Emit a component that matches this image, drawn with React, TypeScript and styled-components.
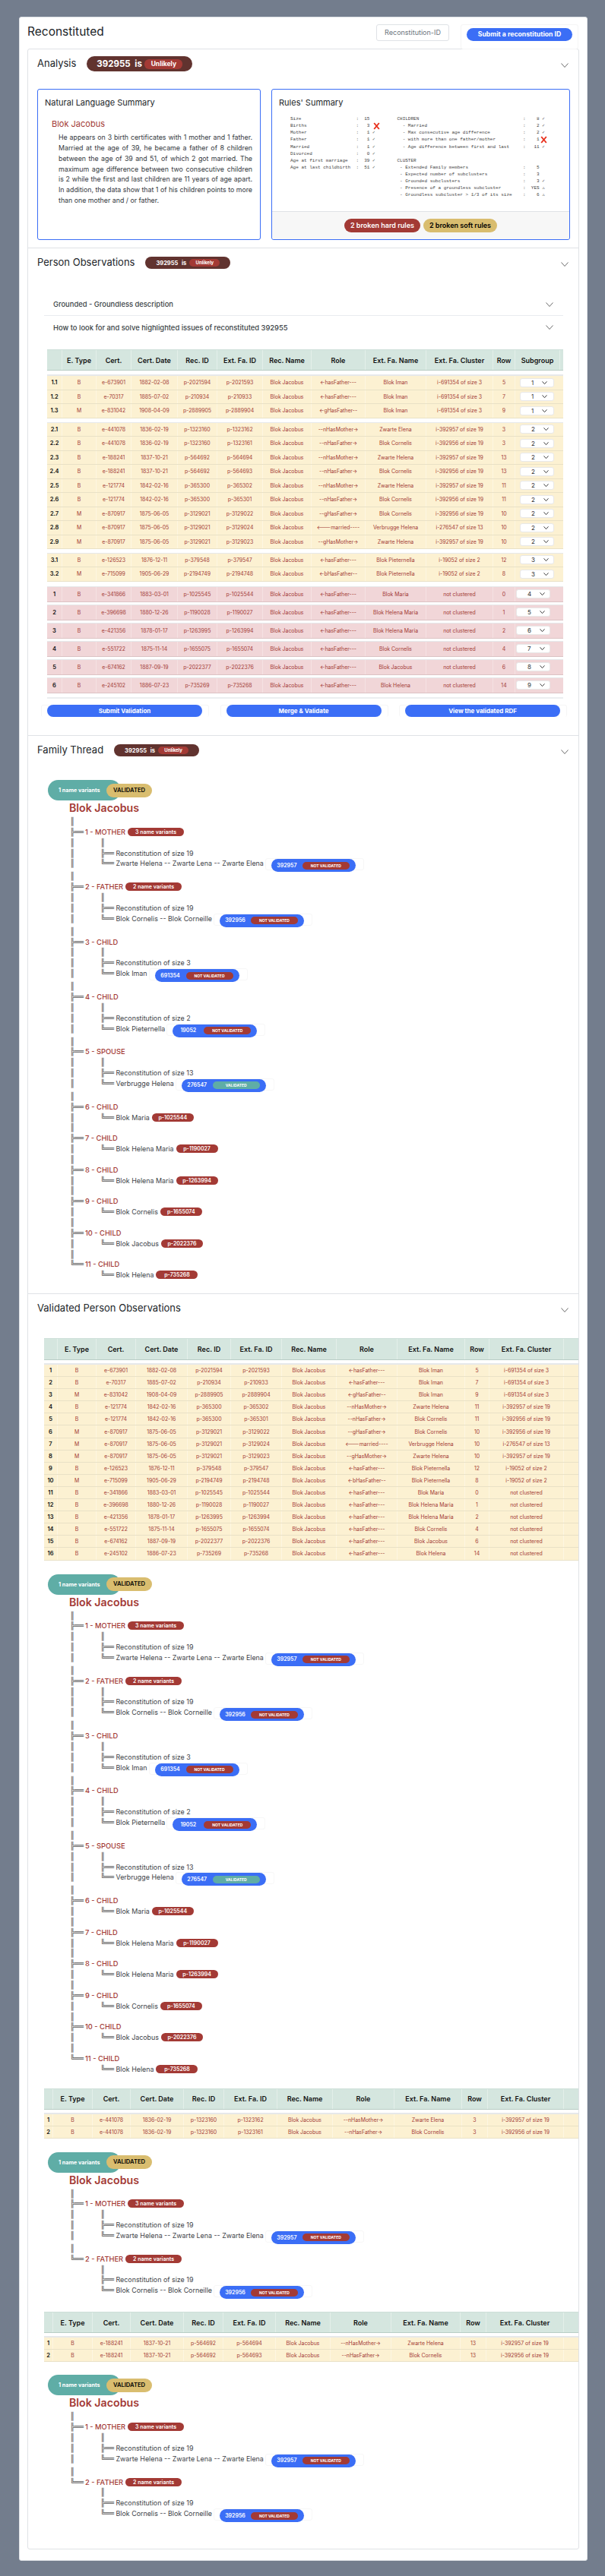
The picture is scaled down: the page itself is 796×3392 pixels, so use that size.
import React from "react";
import styled, { createGlobalStyle } from "styled-components";

const RED = "#a33a35";
const GOLD = "#d9bd6f";
const TEAL = "#5fada6";
const BLUE = "#3b6ef6";
const BROWN = "#61332f";

const Global = createGlobalStyle`
  html, body { margin: 0; padding: 0; background: #737d8d; }
  body { font-family: Inter, "Liberation Sans", sans-serif; color: #212529; }
  * { box-sizing: border-box; }
`;

const Page = styled.div`
  padding: 22px 23px 20px 25px;
  height: 3392px;
  overflow: hidden;
`;
const Card = styled.div`
  height: 3350px;
  background: #fff;
  border: 1px solid #dfe2e6;
  border-radius: 3px;
  padding: 0 10px;
`;
const CardHead = styled.div`
  display: flex;
  align-items: flex-start;
  height: 41px;
  padding-top: 9px;
`;
const PageTitle = styled.h1`
  flex: 1;
  margin: 0;
  font-size: 15.5px;
  line-height: 19px;
  font-weight: 400;
`;
const IdInput = styled.div`
  width: 96px;
  height: 22px;
  border: 1px solid #dfe2e6;
  border-radius: 3px;
  font-size: 9px;
  line-height: 20px;
  text-align: center;
  color: #6c757d;
`;
const SubmitWrap = styled.div`
  margin-left: 15px;
  margin-right: 1px;
  padding: 4px 7px 10px;
  border: 1px solid #f5f5f5;
  border-radius: 3px;
  display: flex;
`;
const PrimaryButton = styled.div<{ $w: number }>`
  width: ${(p) => p.$w}px;
  height: 17px;
  border-radius: 9px;
  background: ${BLUE};
  color: #fff;
  font-size: 8.7px;
  line-height: 17px;
  font-weight: 700;
  text-align: center;
`;
const Accordion = styled.div`
  height: 3293px;
  border: 1px solid #dfe2e6;
  border-radius: 3px;
`;
const Section = styled.section<{ $first?: boolean }>`
  border-top: ${(p) => (p.$first ? "0" : "1px solid #dfe2e6")};
`;
const SectionHead = styled.div`
  height: 36px;
  padding: 0 13px 0 12px;
  display: flex;
  align-items: center;
  gap: 14px;
`;
const SectionTitle = styled.h2`
  margin: 0;
  font-size: 13px;
  font-weight: 400;
  white-space: nowrap;
`;
const Spacer = styled.div`
  flex: 1;
`;
const ChevronBox = styled.span`
  display: flex;
  margin-top: 5px;
`;
const Status = styled.div<{ $big?: boolean }>`
  display: flex;
  align-items: center;
  justify-content: space-between;
  width: ${(p) => (p.$big ? 139 : 112)}px;
  height: ${(p) => (p.$big ? 20 : 16)}px;
  padding: ${(p) => (p.$big ? "0 13px 0 13px" : "0 14px 0 14px")};
  border-radius: ${(p) => (p.$big ? 10 : 8)}px;
  background: ${BROWN};
  color: #fff;
  font-size: ${(p) => (p.$big ? 11.5 : 7.5)}px;
  font-weight: 700;
  word-spacing: 3px;
  margin-top: 2px;
`;
const StatusTag = styled.span<{ $big?: boolean }>`
  width: ${(p) => (p.$big ? 50 : 40)}px;
  height: ${(p) => (p.$big ? 13 : 10)}px;
  line-height: ${(p) => (p.$big ? 13 : 10)}px;
  border-radius: 6px;
  background: ${RED};
  font-size: ${(p) => (p.$big ? 8.5 : 6)}px;
  text-align: center;
`;
const AnalysisBody = styled.div`
  padding: 16px 13px 10px 12px;
  display: grid;
  grid-template-columns: 294px 393px;
  gap: 14px;
  height: 225px;
`;
const InfoBox = styled.div`
  height: 199px;
  border: 1px solid ${BLUE};
  border-radius: 3px;
  display: flex;
  flex-direction: column;
`;
const InfoInner = styled.div`
  flex: 1;
  padding: 10px 9px 0;
`;
const InfoTitle = styled.h3`
  margin: 0;
  font-size: 11px;
  line-height: 15px;
  font-weight: 400;
`;
const PersonName = styled.h4`
  margin: 13px 0 0 9px;
  font-size: 11px;
  line-height: 15px;
  font-weight: 400;
  color: ${RED};
`;
const Summary = styled.p`
  margin: 3px 1px 0 18px;
  font-size: 8.8px;
  line-height: 13.85px;
  text-align: justify;
  color: #33383d;
`;
const MonoColumns = styled.div`
  display: flex;
  margin: 9px 0 0 15px;
  gap: 0;
`;
const Mono = styled.div<{ $w: number }>`
  width: ${(p) => p.$w}px;
  font-family: "Liberation Mono", "DejaVu Sans Mono", monospace;
  font-size: 6px;
  line-height: 9.14px;
  color: #444;
  white-space: pre;
`;
const MonoLine = styled.div`
  height: 9.14px;
  position: relative;
`;
const BadMark = styled.svg`
  position: absolute;
  top: 0;
  width: 9px;
  height: 10px;
`;
const InfoFoot = styled.div`
  height: 37px;
  background: #f7f7f7;
  border-top: 1px solid #dfe2e6;
  border-radius: 0 0 3px 3px;
  display: flex;
  align-items: center;
  justify-content: center;
  gap: 4px;
`;
const RulePill = styled.span<{ $soft?: boolean }>`
  height: 18px;
  padding: 0 8px;
  border-radius: 9px;
  line-height: 18px;
  font-size: 9px;
  font-weight: 600;
  color: ${(p) => (p.$soft ? "#000" : "#fff")};
  background: ${(p) => (p.$soft ? GOLD : RED)};
`;
const PersonBody = styled.div`
  padding: 23px 20px 0 21px;
  height: 605px;
`;
const SubRow = styled.div<{ $line?: boolean }>`
  height: 30px;
  display: flex;
  align-items: center;
  padding: 0 13px 0 12px;
  border-bottom: ${(p) => (p.$line ? "1px solid #e8ebef" : "0")};
  font-size: 9.4px;
  font-weight: 500;
  color: #3a3f45;
`;
const TableBox = styled.div<{ $ml: number; $mt: number }>`
  margin-left: ${(p) => p.$ml}px;
  margin-top: ${(p) => p.$mt}px;
`;
const HeadRow = styled.div<{ $cols: number[]; $h: number }>`
  display: grid;
  grid-template-columns: ${(p) => p.$cols.map((c) => c + "px").join(" ")};
  height: ${(p) => p.$h}px;
  background: #d5e6df;
  border-bottom: 1px solid #b9cdc5;
  border-top: 1px solid #cddfd8;
`;
const HeadCell = styled.div`
  display: flex;
  align-items: center;
  justify-content: center;
  border-right: 1px solid #e4efea;
  font-size: 9px;
  font-weight: 600;
  color: #111;
  white-space: nowrap;
`;
const RowGroup = styled.div<{ $mt: number; $band: number }>`
  margin-top: ${(p) => p.$mt}px;
  border-top: ${(p) => p.$band}px solid #e6e8ea;
`;
const DataRow = styled.div<{ $cols: number[]; $h: number; $pink?: boolean }>`
  display: grid;
  grid-template-columns: ${(p) => p.$cols.map((c) => c + "px").join(" ")};
  height: ${(p) => p.$h}px;
  background: ${(p) => (p.$pink ? "#f1d6d8" : "#fcf1d2")};
  border-bottom: ${(p) => (p.$pink ? "1px solid #dcc2c3" : "1px solid #e9e1c6")};
`;
const Cell = styled.div<{ $index?: boolean; $pink?: boolean }>`
  display: flex;
  align-items: center;
  justify-content: center;
  border-right: 1px solid ${(p) => (p.$pink ? "#f5e2e3" : "#fdf6e2")};
  font-size: ${(p) => (p.$index ? 7.5 : 6.9)}px;
  font-weight: ${(p) => (p.$index ? 600 : 400)};
  color: ${(p) => (p.$index ? "#111" : RED)};
  white-space: nowrap;
`;
const SelectBox = styled.div<{ $ml: number }>`
  align-self: center;
  margin-left: ${(p) => p.$ml}px;
  width: 45px;
  height: 12px;
  background: #fff;
  border: 1px solid #e8e8e8;
  border-radius: 3px;
  position: relative;
  font-size: 8px;
  line-height: 10px;
  color: #333;
  padding-left: 14px;
  display: flex;
  align-items: center;
  gap: 11px;
`;
const EndBand = styled.div`
  margin-top: 5px;
  height: 2px;
  background: #eceef0;
`;
const ActionRow = styled.div`
  display: grid;
  grid-template-columns: repeat(3, 221px);
  gap: 14.5px;
  margin: 8px 0 0 -4px;
`;
const ActionWrap = styled.div`
  height: 16px;
  padding-left: 7px;
  border: 1px solid #f6f6f6;
  border-bottom: 0;
  border-radius: 3px;
`;
const ActionButton = styled.div`
  width: 204px;
  height: 16px;
  margin-top: -1px;
  border-radius: 8px;
  background: ${BLUE};
  color: #fff;
  font-size: 8px;
  line-height: 16px;
  font-weight: 700;
  text-align: center;
`;
const TreeBlock = styled.div<{ $mt: number; $ml: number }>`
  margin: ${(p) => p.$mt}px 0 0 ${(p) => p.$ml}px;
`;
const TreeBadges = styled.div`
  display: flex;
  align-items: center;
  height: 27px;
`;
const VariantPill = styled.span`
  width: 96px;
  height: 27px;
  padding-left: 14px;
  border-radius: 14px;
  background: ${TEAL};
  color: #fff;
  font-size: 7.2px;
  line-height: 27px;
  font-weight: 700;
  white-space: nowrap;
`;
const ValidatedPill = styled.span`
  width: 60px;
  height: 18px;
  margin-left: -19px;
  border-radius: 9px;
  background: ${GOLD};
  color: #000;
  font-size: 7.6px;
  line-height: 18px;
  font-weight: 600;
  text-align: center;
  z-index: 1;
`;
const TreeName = styled.div`
  margin: 1px 0 2px 28px;
  height: 18px;
  font-size: 14.2px;
  line-height: 18px;
  font-weight: 600;
  color: ${RED};
`;
const Tree = styled.div`
  margin-left: 29px;
`;
const Line = styled.div<{ $tall?: boolean }>`
  display: flex;
  align-items: flex-start;
  height: ${(p) => (p.$tall ? 17 : 13.85)}px;
  line-height: 13.85px;
  white-space: nowrap;
`;
const Glyph = styled.span<{ $w: number }>`
  flex: none;
  width: ${(p) => p.$w}px;
  font-family: "DejaVu Sans Mono", monospace;
  font-size: 10px;
  line-height: 13.85px;
  color: #555;
  white-space: pre;
`;
const BranchLabel = styled.span`
  font-size: 9.3px;
  font-weight: 500;
  color: ${RED};
`;
const Leaf = styled.span`
  font-size: 8.9px;
  color: #3d4247;
`;
const RedTag = styled.span<{ $ml: number; $w: number }>`
  margin: 1px 0 0 ${(p) => p.$ml}px;
  width: ${(p) => p.$w}px;
  height: 11px;
  border-radius: 6px;
  background: ${RED};
  color: #fff;
  font-size: 7px;
  line-height: 11px;
  font-weight: 600;
  text-align: center;
`;
const ReconWrap = styled.span`
  margin-left: 2px;
  padding: 0 10px 0 7px;
  height: 16px;
  border: 1px solid #f7f7f7;
  border-radius: 3px;
  display: flex;
`;
const ReconPill = styled.span`
  width: 111px;
  height: 17px;
  border-radius: 9px;
  background: ${BLUE};
  display: flex;
  align-items: center;
  color: #fff;
  font-size: 7px;
  font-weight: 600;
`;
const ReconId = styled.span`
  width: 41px;
  text-align: center;
`;
const ReconState = styled.span<{ $ok?: boolean }>`
  width: 62px;
  height: 10px;
  border-radius: 5px;
  background: ${(p) => (p.$ok ? TEAL : RED)};
  font-size: 5px;
  line-height: 10px;
  font-weight: 700;
  text-align: center;
`;
const FamilyBody = styled.div`
  padding: 22px 0 0 14px;
  height: 698px;
`;
const ValidatedBody = styled.div`
  padding: 22px 0 0 21px;
`;

const Chevron = ({ small }: { small?: boolean }) => (
  <svg width={small ? 7 : 10} height={small ? 4 : 6} viewBox="0 0 10 6" fill="none" stroke={small ? "#333" : "#444"} strokeWidth={small ? 1.4 : 0.8}>
    <polyline points="0.5,0.5 5,5.5 9.5,0.5" />
  </svg>
);

const StatusBadge = ({ big }: { big?: boolean }) => (
  <Status $big={big}>
    392955 is
    <StatusTag $big={big}>Unlikely</StatusTag>
  </Status>
);

type Rec = { t: string; c: string; d: string; r: string; e: string; ro: string; n: string; cl: string; row: string };
const mk = (t: string, c: string, d: string, r: string, e: string, ro: string, n: string, cl: string, row: string): Rec => ({ t, c, d, r, e, ro, n, cl, row });
const HF = "<-hasFather---";
const NM = "--nHasMother->";
const NF = "--nHasFather->";
const C57 = "i-392957 of size 19";
const C56 = "i-392956 of size 19";
const C54 = "i-691354 of size 3";
const C52 = "i-19052 of size 2";
const NC = "not clustered";

const r11 = mk("B", "e-673901", "1882-02-08", "p-2021594", "p-2021593", HF, "Blok Iman", C54, "5");
const r12 = mk("B", "e-70317", "1885-07-02", "p-210934", "p-210933", HF, "Blok Iman", C54, "7");
const r13 = mk("M", "e-831042", "1908-04-09", "p-2889905", "p-2889904", "<-gHasFather--", "Blok Iman", C54, "9");
const r21 = mk("B", "e-441078", "1836-02-19", "p-1323160", "p-1323162", NM, "Zwarte Elena", C57, "3");
const r22 = mk("B", "e-441078", "1836-02-19", "p-1323160", "p-1323161", NF, "Blok Cornelis", C56, "3");
const r23 = mk("B", "e-188241", "1837-10-21", "p-564692", "p-564694", NM, "Zwarte Helena", C57, "13");
const r24 = mk("B", "e-188241", "1837-10-21", "p-564692", "p-564693", NF, "Blok Cornelis", C56, "13");
const r25 = mk("B", "e-121774", "1842-02-16", "p-365300", "p-365302", NM, "Zwarte Helena", C57, "11");
const r26 = mk("B", "e-121774", "1842-02-16", "p-365300", "p-365301", NF, "Blok Cornelis", C56, "11");
const r27 = mk("M", "e-870917", "1875-06-05", "p-3129021", "p-3129022", "--gHasFather->", "Blok Cornelis", C56, "10");
const r28 = mk("M", "e-870917", "1875-06-05", "p-3129021", "p-3129024", "<---married----", "Verbrugge Helena", "i-276547 of size 13", "10");
const r29 = mk("M", "e-870917", "1875-06-05", "p-3129021", "p-3129023", "--gHasMother->", "Zwarte Helena", C57, "10");
const r31 = mk("B", "e-126523", "1876-12-11", "p-379548", "p-379547", HF, "Blok Pieternella", C52, "12");
const r32 = mk("M", "e-715099", "1905-06-29", "p-2194749", "p-2194748", "<-bHasFather--", "Blok Pieternella", C52, "8");
const s1 = mk("B", "e-341866", "1883-03-01", "p-1025545", "p-1025544", HF, "Blok Maria", NC, "0");
const s2 = mk("B", "e-396698", "1880-12-26", "p-1190028", "p-1190027", HF, "Blok Helena Maria", NC, "1");
const s3 = mk("B", "e-421356", "1878-01-17", "p-1263995", "p-1263994", HF, "Blok Helena Maria", NC, "2");
const s4 = mk("B", "e-551722", "1875-11-14", "p-1655075", "p-1655074", HF, "Blok Cornelis", NC, "4");
const s5 = mk("B", "e-674162", "1887-09-19", "p-2022377", "p-2022376", HF, "Blok Jacobus", NC, "6");
const s6 = mk("B", "e-245102", "1886-07-23", "p-735269", "p-735268", HF, "Blok Helena", NC, "14");

const CELLS = (x: Rec) => [x.t, x.c, x.d, x.r, x.e, "Blok Jacobus", x.ro, x.n];

const SubgroupSelect = ({ v, pink }: { v: number; pink?: boolean }) => (
  <SelectBox $ml={pink ? 1 : 6}>
    {v}
    <Chevron small />
  </SelectBox>
);

const T1 = [20, 45, 46, 61, 52, 60, 64, 71, 80, 88, 29, 59];
const H1 = ["", "E. Type", "Cert.", "Cert. Date", "Rec. ID", "Ext. Fa. ID", "Rec. Name", "Role", "Ext. Fa. Name", "Ext. Fa. Cluster", "Row", "Subgroup"];
const H2 = ["", "E. Type", "Cert.", "Cert. Date", "Rec. ID", "Ext. Fa. ID", "Rec. Name", "Role", "Ext. Fa. Name", "Row", "Ext. Fa. Cluster"];

const ReviewRow = ({ id, x, sel, pink, h }: { id: string; x: Rec; sel: number; pink?: boolean; h: number }) => (
  <DataRow $cols={T1} $h={h} $pink={pink}>
    <Cell $index $pink={pink}>{id}</Cell>
    {CELLS(x).map((v, i) => (
      <Cell key={i} $pink={pink}>{v}</Cell>
    ))}
    <Cell $pink={pink}>{x.cl}</Cell>
    <Cell $pink={pink}>{x.row}</Cell>
    <SubgroupSelect v={sel} pink={pink} />
  </DataRow>
);

const ValidatedTable = ({ cols, recs, rowH, mt, hh, gap }: { cols: number[]; recs: Rec[]; rowH: number; mt: number; hh: number; gap: number }) => (
  <TableBox $ml={0} $mt={mt}>
    <HeadRow $cols={cols} $h={hh}>
      {H2.map((h, i) => (
        <HeadCell key={i}>{h}</HeadCell>
      ))}
    </HeadRow>
    <RowGroup $mt={gap} $band={2}>
      {recs.map((x, i) => (
        <DataRow key={i} $cols={cols} $h={rowH}>
          <Cell $index>{i + 1}</Cell>
          {CELLS(x).map((v, j) => (
            <Cell key={j}>{v}</Cell>
          ))}
          <Cell>{x.row}</Cell>
          <Cell>{x.cl}</Cell>
        </DataRow>
      ))}
    </RowGroup>
  </TableBox>
);

type Branch = {
  label: string;
  variants?: [string, number, number];
  size?: number;
  name: string;
  id?: string;
  ok?: boolean;
  person?: [string, number];
};

const MOTHER: Branch = { label: "1 - MOTHER", variants: ["3 name variants", 3, 74], size: 19, name: "Zwarte Helena -- Zwarte Lena -- Zwarte Elena", id: "392957" };
const FATHER: Branch = { label: "2 - FATHER", variants: ["2 name variants", 3, 74], size: 19, name: "Blok Cornelis -- Blok Corneille", id: "392956" };
const FULL: Branch[] = [
  MOTHER,
  FATHER,
  { label: "3 - CHILD", size: 3, name: "Blok Iman", id: "691354" },
  { label: "4 - CHILD", size: 2, name: "Blok Pieternella", id: "19052" },
  { label: "5 - SPOUSE", size: 13, name: "Verbrugge Helena", id: "276547", ok: true },
  { label: "6 - CHILD", name: "Blok Maria", person: ["p-1025544", 55] },
  { label: "7 - CHILD", name: "Blok Helena Maria", person: ["p-1190027", 55] },
  { label: "8 - CHILD", name: "Blok Helena Maria", person: ["p-1263994", 55] },
  { label: "9 - CHILD", name: "Blok Cornelis", person: ["p-1655074", 55] },
  { label: "10 - CHILD", name: "Blok Jacobus", person: ["p-2022376", 55] },
  { label: "11 - CHILD", name: "Blok Helena", person: ["p-735268", 55] },
];

const FamilyTree = ({ branches, mt, ml }: { branches: Branch[]; mt: number; ml: number }) => (
  <TreeBlock $mt={mt} $ml={ml}>
    <TreeBadges>
      <VariantPill>1 name variants</VariantPill>
      <ValidatedPill>VALIDATED</ValidatedPill>
    </TreeBadges>
    <TreeName>Blok Jacobus</TreeName>
    <Tree>
      {branches.map((b, i) => {
        const last = i === branches.length - 1;
        const rail = last ? "" : "║";
        return (
          <React.Fragment key={i}>
            <Line><Glyph $w={40}>║</Glyph></Line>
            <Line>
              <Glyph $w={20}>{last ? "╚══" : "╠══"}</Glyph>
              <BranchLabel>{b.label}</BranchLabel>
              {b.variants && <RedTag $ml={b.variants[1]} $w={b.variants[2]}>{b.variants[0]}</RedTag>}
            </Line>
            {b.size !== undefined && (
              <>
                <Line><Glyph $w={40}>{rail}</Glyph><Glyph $w={20}>║</Glyph></Line>
                <Line>
                  <Glyph $w={40}>{rail}</Glyph>
                  <Glyph $w={20.5}>╠══</Glyph>
                  <Leaf>Reconstitution of size {b.size}</Leaf>
                </Line>
              </>
            )}
            <Line $tall={!!b.id}>
              <Glyph $w={40}>{rail}</Glyph>
              <Glyph $w={20.5}>╚══</Glyph>
              <Leaf>{b.name}</Leaf>
              {b.id && (
                <ReconWrap>
                  <ReconPill>
                    <ReconId>{b.id}</ReconId>
                    <ReconState $ok={b.ok}>{b.ok ? "VALIDATED" : "NOT VALIDATED"}</ReconState>
                  </ReconPill>
                </ReconWrap>
              )}
              {b.person && <RedTag $ml={3} $w={b.person[1]}>{b.person[0]}</RedTag>}
            </Line>
          </React.Fragment>
        );
      })}
    </Tree>
  </TreeBlock>
);

const X = ({ left }: { left: number }) => (
  <BadMark viewBox="0 0 9 10" style={{ left }} fill="none" stroke="#e8301c" strokeWidth="1.9">
    <path d="M1.2 1 L7.8 9 M7.8 1 L1.2 9" />
  </BadMark>
);

const leftRow = (l: string, v: string, m = "✓") => `${l.padEnd(24)}: ${v.padStart(3)} ${m}`;
const rightRow = (l: string, v: string, m = "") => `${l.padEnd(46)}: ${v.padStart(4)} ${m}`;

const LEFT: [string, boolean?][] = [
  [leftRow("Size", "15", "")],
  [leftRow("Births", "3", ""), true],
  [leftRow("Mother", "1")],
  [leftRow("Father", "1")],
  [leftRow("Married", "1")],
  [leftRow("Divorced", "0")],
  [leftRow("Age at first marriage", "39")],
  [leftRow("Age at last childbirth", "51")],
];
const RIGHT: [string, boolean?][] = [
  [rightRow("CHILDREN", "8", "✓")],
  [rightRow("  - Married", "2", "✓")],
  [rightRow("  - Max consecutive age difference", "2", "✓")],
  [rightRow("  - with more than one father/mother", "1"), true],
  [rightRow("  - Age difference between first and last", "11", "✓")],
  [" "],
  ["CLUSTER"],
  [rightRow(" - Extended Family members", "5")],
  [rightRow(" - Expected number of subclusters", "3")],
  [rightRow(" - Grounded subclusters", "3", "✓")],
  [rightRow(" - Presence of a groundless subcluster", "YES", "⚠")],
  [rightRow(" - Groundless subcluster > 1/3 of its size", "6", "⚠")],
];

const T2 = [18, 51, 52, 68, 57, 67, 72, 80, 89, 32, 98];
const T3 = [12, 52, 50, 70, 53, 70, 73, 81, 89, 34, 100];
const T4 = [12, 52, 50, 70, 52, 69, 72, 80, 91, 34, 102];

const Head = ({ title, big }: { title: string; big?: boolean }) => (
  <SectionHead>
    <SectionTitle>{title}</SectionTitle>
    {big !== undefined && <StatusBadge big={big} />}
    <Spacer />
    <ChevronBox><Chevron /></ChevronBox>
  </SectionHead>
);

export default function App() {
  return (
    <Page>
      <Global />
      <Card>
        <CardHead>
          <PageTitle>Reconstituted</PageTitle>
          <IdInput>Reconstitution-ID</IdInput>
          <SubmitWrap>
            <PrimaryButton $w={139}>Submit a reconstitution ID</PrimaryButton>
          </SubmitWrap>
        </CardHead>
        <Accordion>
          <Section $first>
            <Head title="Analysis" big />
            <AnalysisBody>
              <InfoBox>
                <InfoInner>
                  <InfoTitle>Natural Language Summary</InfoTitle>
                  <PersonName>Blok Jacobus</PersonName>
                  <Summary>
                    He appears on 3 birth certificates with 1 mother and 1 father. Married at the age of 39, he became a father of 8 children between the age of 39 and 51, of which 2 got married. The maximum age difference between two consecutive children is 2 while the first and last children are 11 years of age apart. In addition, the data show that 1 of his children points to more than one mother and / or father.
                  </Summary>
                </InfoInner>
              </InfoBox>
              <InfoBox>
                <InfoInner>
                  <InfoTitle>Rules' Summary</InfoTitle>
                  <MonoColumns>
                    <Mono $w={142}>
                      {LEFT.map(([t, bad], i) => (
                        <MonoLine key={i}>{t}{bad && <X left={109} />}</MonoLine>
                      ))}
                    </Mono>
                    <Mono $w={220}>
                      {RIGHT.map(([t, bad], i) => (
                        <MonoLine key={i}>{t}{bad && <X left={189} />}</MonoLine>
                      ))}
                    </Mono>
                  </MonoColumns>
                </InfoInner>
                <InfoFoot>
                  <RulePill>2 broken hard rules</RulePill>
                  <RulePill $soft>2 broken soft rules</RulePill>
                </InfoFoot>
              </InfoBox>
            </AnalysisBody>
          </Section>

          <Section>
            <Head title="Person Observations" big={false} />
            <PersonBody>
              <SubRow $line>
                Grounded - Groundless description
                <Spacer />
                <Chevron />
              </SubRow>
              <SubRow>
                How to look for and solve highlighted issues of reconstituted 392955
                <Spacer />
                <Chevron />
              </SubRow>
              <TableBox $ml={4} $mt={14}>
                <HeadRow $cols={T1} $h={28}>
                  {H1.map((h, i) => (
                    <HeadCell key={i}>{h}</HeadCell>
                  ))}
                </HeadRow>
                <RowGroup $mt={5} $band={2}>
                  {[r11, r12, r13].map((x, i) => (
                    <ReviewRow key={i} id={`1.${i + 1}`} x={x} sel={1} h={18.5} />
                  ))}
                </RowGroup>
                <RowGroup $mt={5} $band={1.5}>
                  {[r21, r22, r23, r24, r25, r26, r27, r28, r29].map((x, i) => (
                    <ReviewRow key={i} id={`2.${i + 1}`} x={x} sel={2} h={18.5} />
                  ))}
                </RowGroup>
                <RowGroup $mt={4.5} $band={1}>
                  {[r31, r32].map((x, i) => (
                    <ReviewRow key={i} id={`3.${i + 1}`} x={x} sel={3} h={18.5} />
                  ))}
                </RowGroup>
                {[s1, s2, s3, s4, s5, s6].map((x, i) => (
                  <RowGroup key={i} $mt={i === 0 ? 6 : 3} $band={1}>
                    <ReviewRow id={`${i + 1}`} x={x} sel={i + 4} pink h={20} />
                  </RowGroup>
                ))}
                <EndBand />
              </TableBox>
              <ActionRow>
                {["Submit Validation", "Merge & Validate", "View the validated RDF"].map((t) => (
                  <ActionWrap key={t}>
                    <ActionButton>{t}</ActionButton>
                  </ActionWrap>
                ))}
              </ActionRow>
            </PersonBody>
          </Section>

          <Section>
            <Head title="Family Thread" big={false} />
            <FamilyBody>
              <FamilyTree branches={FULL} mt={0} ml={12} />
            </FamilyBody>
          </Section>

          <Section>
            <Head title="Validated Person Observations" />
            <ValidatedBody>
              <ValidatedTable
                cols={T2}
                recs={[r11, r12, r13, r25, r26, r27, r28, r29, r31, r32, s1, s2, s3, s4, s5, s6]}
                rowH={16.1}
                mt={0}
                hh={29}
                gap={4}
              />
              <FamilyTree branches={FULL} mt={18} ml={5} />
              <ValidatedTable cols={T3} recs={[r21, r22]} rowH={16} mt={18} hh={28} gap={4} />
              <FamilyTree branches={[MOTHER, FATHER]} mt={18} ml={5} />
              <ValidatedTable cols={T4} recs={[r23, r24]} rowH={16} mt={18} hh={28} gap={4} />
              <FamilyTree branches={[MOTHER, FATHER]} mt={17} ml={5} />
            </ValidatedBody>
          </Section>
        </Accordion>
      </Card>
    </Page>
  );
}
